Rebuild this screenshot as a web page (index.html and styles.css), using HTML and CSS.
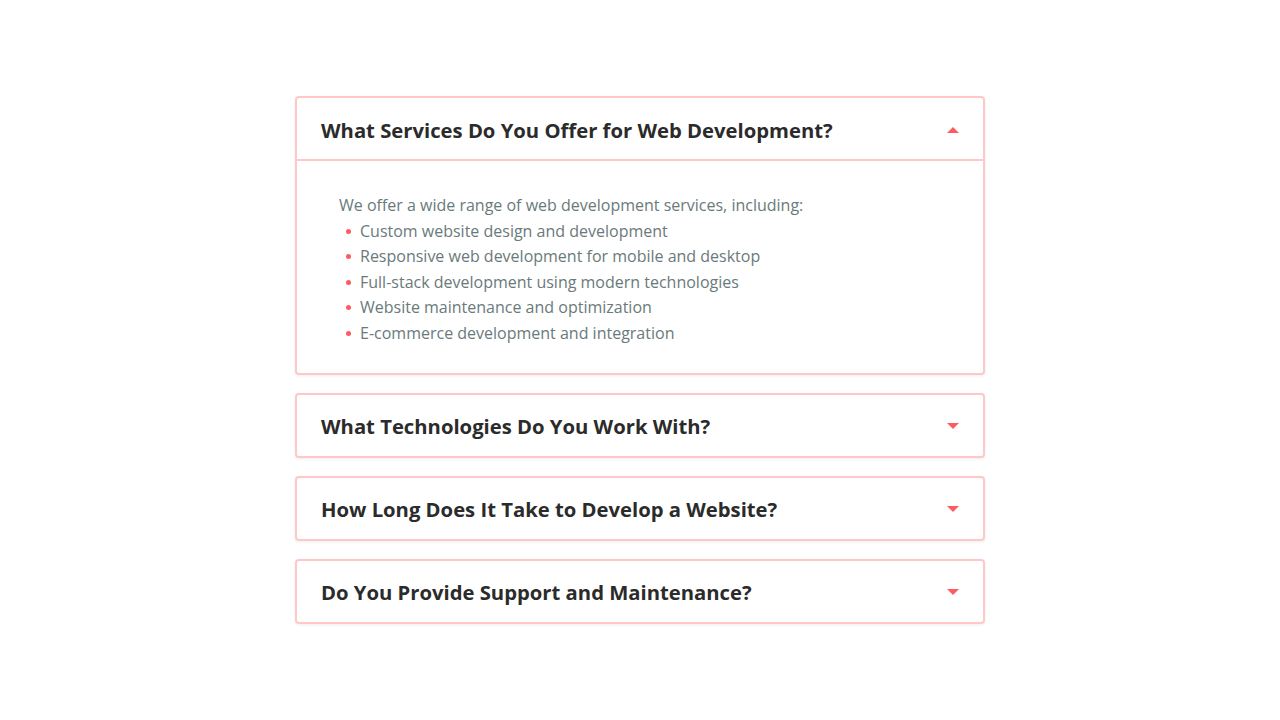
FILE: index.html
```html
<!DOCTYPE html>
<html lang="en">
<head>
<meta charset="utf-8">
<title>FAQ</title>
<link rel="stylesheet" href="styles.css">
</head>
<body>
<main class="faq">
  <section class="item open">
    <div class="head">
      <h3 class="q">What Services Do You Offer for Web Development?</h3>
      <span class="arrow up"></span>
    </div>
    <div class="body">
      <p class="intro">We offer a wide range of web development services, including:</p>
      <ul class="list">
        <li>Custom website design and development</li>
        <li>Responsive web development for mobile and desktop</li>
        <li>Full-stack development using modern technologies</li>
        <li>Website maintenance and optimization</li>
        <li>E-commerce development and integration</li>
      </ul>
    </div>
  </section>
  <section class="item">
    <div class="head">
      <h3 class="q">What Technologies Do You Work With?</h3>
      <span class="arrow"></span>
    </div>
  </section>
  <section class="item">
    <div class="head">
      <h3 class="q">How Long Does It Take to Develop a Website?</h3>
      <span class="arrow"></span>
    </div>
  </section>
  <section class="item">
    <div class="head">
      <h3 class="q">Do You Provide Support and Maintenance?</h3>
      <span class="arrow"></span>
    </div>
  </section>
</main>
</body>
</html>
```
FILE: styles.css
```css
* { box-sizing: border-box; }
html, body { margin: 0; padding: 0; }
body {
  min-height: 100vh;
  display: flex;
  align-items: center;
  justify-content: center;
  background: #ffffff;
  font-family: "Open Sans", "Noto Sans", sans-serif;
}
.faq {
  width: 690px;
  display: flex;
  flex-direction: column;
  gap: 18px;
}
.item {
  border: 2px solid #ffc8c8;
  border-radius: 4px;
  background: #fff;
  box-shadow: 0 1px 3px rgba(0,0,0,0.07);
}
.head {
  height: 61px;
  display: flex;
  align-items: center;
  justify-content: space-between;
  padding: 0 24px;
}
.open .head {
  border-bottom: 2px solid #ffc8c8;
  height: 63px;
  padding-top: 2px;
}
.q {
  margin: 0;
  font-size: 20.25px;
  font-weight: 700;
  color: #2b2b2b;
}
.arrow {
  width: 0; height: 0;
  border-left: 6px solid transparent;
  border-right: 6px solid transparent;
  border-top: 6px solid #ff5a5f;
}
.arrow.up {
  border-top: 0;
  border-bottom: 6px solid #ff5a5f;
}
.body {
  padding: 32px 41px 27px 42px;
  color: #6a7a7b;
  font-size: 16px;
  line-height: 25.5px;
}
.intro { margin: 0; }
.list {
  margin: 0;
  padding: 0;
  list-style: none;
}
.list li {
  display: flex;
  align-items: center;
  gap: 9px;
  padding-left: 7px;
}
.list li::before {
  content: "";
  width: 5px; height: 5px;
  border-radius: 50%;
  background: #ff5a5f;
  flex: none;
}
```
